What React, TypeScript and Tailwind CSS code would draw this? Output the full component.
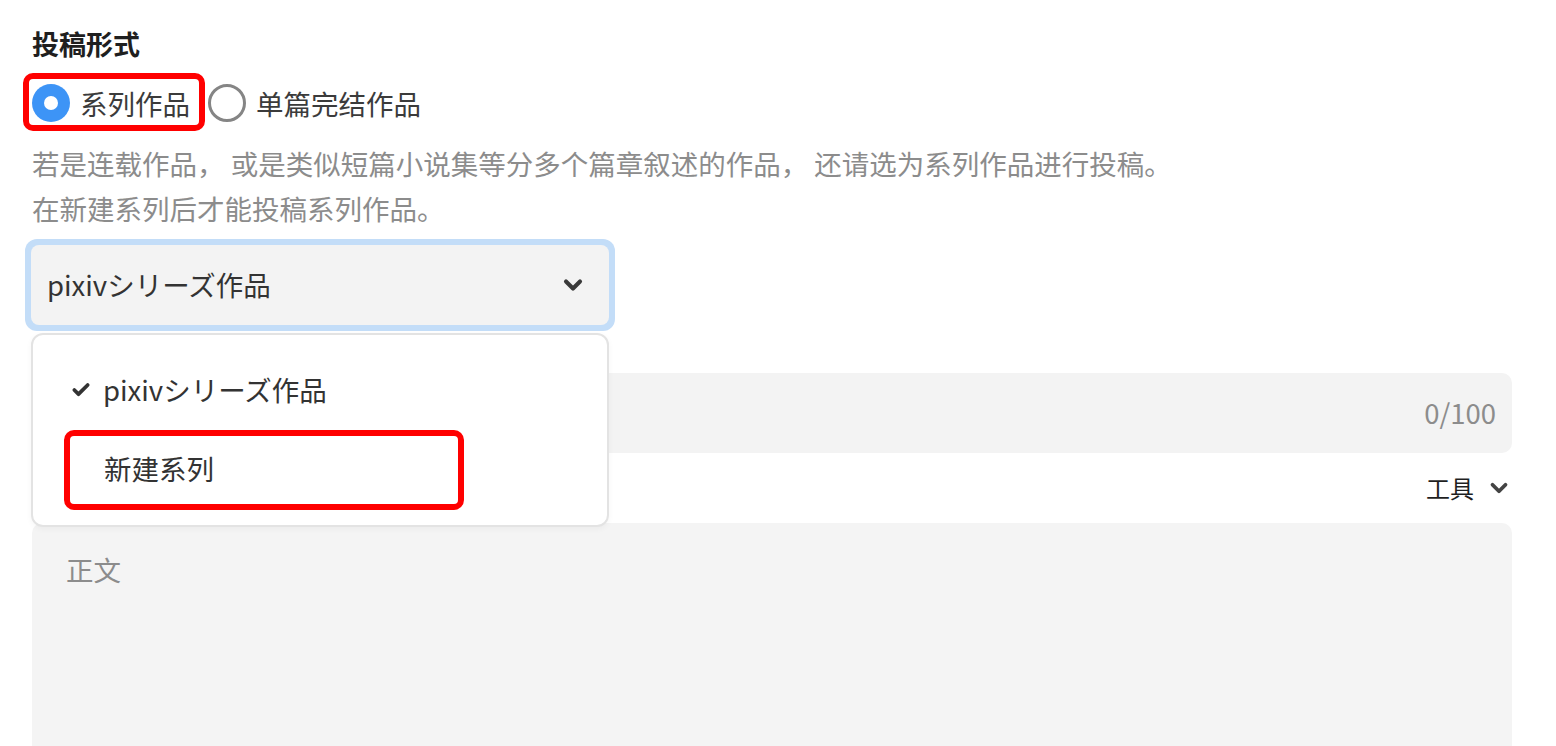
import { Check, ChevronDown } from "lucide-react";

const font = "font-['Noto_Sans_CJK_SC','Noto_Sans',sans-serif]";

function Radio({ checked }: { checked: boolean }) {
  return checked ? (
    <span className="flex h-[38px] w-[38px] shrink-0 items-center justify-center rounded-full bg-[#3d94f6]">
      <span className="h-[14px] w-[14px] rounded-full bg-white" />
    </span>
  ) : (
    <span className="h-[38px] w-[38px] shrink-0 rounded-full border-[3px] border-[#858585] bg-white" />
  );
}

export default function App() {
  return (
    <div className={`h-[746px] w-full overflow-hidden bg-white ${font}`}>
      <div className="w-[1512px] pl-[32px] pt-[24px]">
        {/* 投稿形式 */}
        <h2 className="text-[27px] font-bold leading-[40px] text-[#1f1f1f]">
          投稿形式
        </h2>

        <div className="relative mt-[19px] flex items-center">
          <label className="flex items-center gap-[10px]">
            <Radio checked />
            <span className="text-[27.5px] leading-[40px] text-[#3b3b3b]">
              系列作品
            </span>
          </label>
          <label className="ml-[18px] flex items-center gap-[10px]">
            <Radio checked={false} />
            <span className="text-[27.5px] leading-[40px] text-[#3b3b3b]">
              单篇完结作品
            </span>
          </label>

          {/* highlight */}
          <div className="pointer-events-none absolute left-[-9px] top-[-10px] h-[58px] w-[182px] rounded-[10px] border-[6px] border-[#ff0000]" />
        </div>

        <div className="mt-[18px] text-[27.5px] leading-[45px] text-[#8c8c8c]">
          <p>若是连载作品， 或是类似短篇小说集等分多个篇章叙述的作品， 还请选为系列作品进行投稿。</p>
          <p>在新建系列后才能投稿系列作品。</p>
        </div>

        {/* series select */}
        <div className="relative mt-[8px] w-[590px] -ml-[7px]">
          <div className="rounded-[12px] bg-[#c3ddf8] p-[6px]">
            <div className="flex h-[80px] items-center justify-between rounded-[8px] bg-[#f3f3f3] pl-[16px] pr-[22px]">
              <span className="text-[27.5px] text-[#333]">pixivシリーズ作品</span>
              <ChevronDown size={28} strokeWidth={3.5} className="text-[#3a3a3a]" />
            </div>
          </div>

          <div className="absolute left-[6px] top-[94px] z-10 h-[194px] w-[578px] rounded-[12px] border-2 border-[#e3e3e3] bg-white pt-[26px] shadow-[0_2px_6px_rgba(0,0,0,0.04)]">
            <div className="flex h-[58px] items-center pl-[38px] text-[27.5px] text-[#333]">
              <Check size={20} strokeWidth={4.5} className="mr-[12px] text-[#333]" />
              <span>pixivシリーズ作品</span>
            </div>
            <div className="relative mt-[21px] flex h-[58px] items-center pl-[71px] text-[27.5px] text-[#333]">
              <span>新建系列</span>
              <div className="pointer-events-none absolute left-[31px] top-[-10px] h-[80px] w-[400px] rounded-[10px] border-[6px] border-[#ff0000]" />
            </div>
          </div>
        </div>

        {/* title */}
        <div className="mt-[42px] flex h-[80px] items-center justify-end rounded-[10px] bg-[#f3f3f3] pr-[16px]">
          <span className="text-[27.5px] text-[#8c8c8c]">0/100</span>
        </div>

        <div className="flex h-[70px] items-center justify-end">
          <span className="text-[24px] text-[#1f1f1f]">工具</span>
          <ChevronDown size={26} strokeWidth={3.5} className="ml-[12px] text-[#444]" />
        </div>

        {/* body */}
        <div className="h-[260px] rounded-t-[10px] bg-[#f4f4f4] px-[34px] pt-[26px]">
          <span className="text-[27.5px] leading-[40px] text-[#8c8c8c]">正文</span>
        </div>
      </div>
    </div>
  );
}
